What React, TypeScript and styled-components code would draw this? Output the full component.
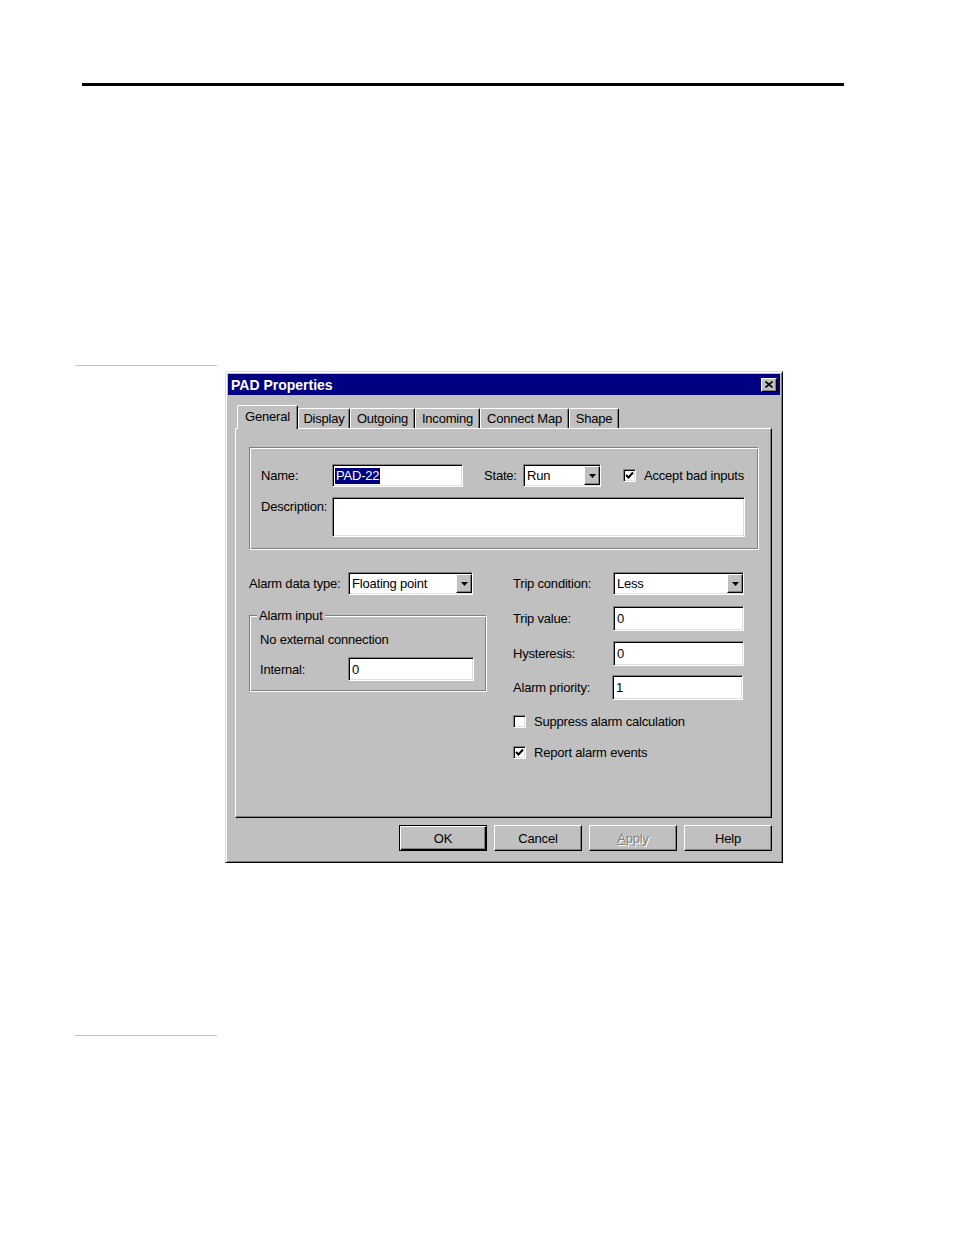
import React from 'react';
import styled, { createGlobalStyle, css } from 'styled-components';

const GlobalStyle = createGlobalStyle`
  html, body { margin: 0; padding: 0; background: #fff; }
  body { font-family: 'Liberation Sans', Arial, sans-serif; }
  * { box-sizing: border-box; }
`;

const Page = styled.div`
  width: 954px;
  min-height: 1235px;
  padding-top: 83px;
`;

const TopRule = styled.div`
  margin-left: 82px;
  width: 762px;
  height: 3px;
  background: #000;
`;

const FigureRow = styled.div`
  display: flex;
  align-items: flex-start;
  margin: 279px 0 0 75px;
`;

const MarginRule = styled.div`
  width: 142px;
  border-top: 1px solid #c4c4c4;
`;

const BottomRule = styled(MarginRule)`
  margin: 172px 0 0 75px;
`;

// ---- window chrome ----

const raised = css`
  border: 1px solid;
  border-color: #fff #000 #000 #fff;
  box-shadow: inset -1px -1px 0 #808080;
`;

const sunken = css`
  border: 1px solid;
  border-color: #808080 #fff #fff #808080;
  box-shadow: inset 1px 1px 0 #000, inset -1px -1px 0 #dfdfdf;
`;

const etched = css`
  border: 1px solid;
  border-color: #808080 #fff #fff #808080;
  box-shadow: inset 1px 1px 0 #fff, inset -1px -1px 0 #808080;
`;

const Dialog = styled.div`
  margin: 6px 0 0 8px;
  width: 558px;
  height: 492px;
  background: #c0c0c0;
  border: 1px solid;
  border-color: #dfdfdf #000 #000 #dfdfdf;
  box-shadow: inset 1px 1px 0 #fff, inset -1px -1px 0 #808080;
  padding: 2px;
  display: flex;
  flex-direction: column;
  font-size: 13px;
  letter-spacing: -0.2px;
  color: #000;
`;

const TitleBar = styled.div`
  height: 21px;
  background: #000080;
  color: #fff;
  font-weight: bold;
  font-size: 14px;
  letter-spacing: 0;
  display: flex;
  align-items: center;
  justify-content: space-between;
  padding: 0 3px 0 3px;
`;

const CloseButton = styled.div`
  ${raised};
  width: 16px;
  height: 14px;
  background: #c0c0c0;
  display: flex;
  align-items: center;
  justify-content: center;
`;

const Body = styled.div`
  flex: 1;
  display: flex;
  flex-direction: column;
  padding: 10px 8px 8px 7px;
`;

const TabStrip = styled.div`
  display: flex;
  align-items: flex-end;
  height: 23px;
  padding-left: 2px;
`;

const Tab = styled.div<{ $w: number; $active?: boolean }>`
  width: ${p => p.$w}px;
  height: ${p => (p.$active ? 24 : 20)}px;
  margin-bottom: ${p => (p.$active ? -1 : 0)}px;
  position: relative;
  z-index: ${p => (p.$active ? 1 : 0)};
  background: #c0c0c0;
  border-top: 1px solid #fff;
  border-left: 1px solid #fff;
  border-right: 1px solid #000;
  border-radius: 2px 2px 0 0;
  box-shadow: inset -1px 0 0 #808080;
  display: flex;
  align-items: ${p => (p.$active ? 'flex-start' : 'center')};
  padding-top: ${p => (p.$active ? 3 : 0)}px;
  justify-content: center;
  white-space: nowrap;
`;

const Panel = styled.div`
  ${raised};
  width: 537px;
  height: 390px;
  padding: 18px 0 0 13px;
`;

const TopGroup = styled.div`
  ${etched};
  width: 510px;
  height: 103px;
  padding: 16px 0 0 11px;
`;

const Row = styled.div<{ $top?: number; $align?: string }>`
  display: flex;
  align-items: ${p => p.$align || 'center'};
  margin-top: ${p => p.$top || 0}px;
  white-space: nowrap;
`;

const Label = styled.span<{ $w?: number; $top?: number }>`
  width: ${p => (p.$w ? `${p.$w}px` : 'auto')};
  flex: none;
  padding-top: ${p => p.$top || 0}px;
  line-height: 15px;
`;

const Field = styled.div<{ $w: number; $h: number; $ml?: number }>`
  ${sunken};
  width: ${p => p.$w}px;
  height: ${p => p.$h}px;
  margin-left: ${p => p.$ml || 0}px;
  background: #fff;
  display: flex;
  align-items: center;
  padding: 0 2px 0 3px;
  flex: none;
`;

const Selected = styled.span`
  background: #000080;
  color: #fff;
  margin-left: -1px;
  padding: 0 1px;
  line-height: 16px;
`;

const ComboText = styled.span`
  flex: 1;
`;

const ComboButton = styled.div`
  ${raised};
  width: 16px;
  height: 19px;
  margin-right: -1px;
  background: #c0c0c0;
  display: flex;
  align-items: center;
  justify-content: center;
`;

const CheckBox = styled.div<{ $ml?: number }>`
  ${sunken};
  width: 13px;
  height: 13px;
  background: #fff;
  margin-left: ${p => p.$ml || 0}px;
  margin-right: 8px;
  flex: none;
  display: flex;
  align-items: center;
  justify-content: center;
`;

const Lower = styled.div`
  display: flex;
  margin-top: 22px;
`;

const LeftCol = styled.div`
  width: 238px;
`;

const RightCol = styled.div`
  width: 231px;
  margin-left: 26px;
`;

const InputGroup = styled.div`
  ${etched};
  position: relative;
  margin-top: 20px;
  width: 238px;
  height: 77px;
  padding: 16px 0 0 10px;
`;

const Legend = styled.span`
  position: absolute;
  top: -8px;
  left: 7px;
  padding: 0 2px;
  background: #c0c0c0;
  line-height: 15px;
`;

const Note = styled.div`
  line-height: 15px;
`;

const Footer = styled.div`
  display: flex;
  justify-content: flex-end;
  gap: 7px;
  margin-top: 7px;
`;

const Button = styled.div<{ $default?: boolean; $disabled?: boolean }>`
  width: 88px;
  height: 26px;
  display: flex;
  align-items: center;
  justify-content: center;
  background: #c0c0c0;
  ${p =>
    p.$default
      ? css`
          border: 1px solid #000;
          box-shadow: inset 1px 1px 0 #fff, inset -1px -1px 0 #000, inset -2px -2px 0 #808080;
        `
      : raised};
  ${p =>
    p.$disabled &&
    css`
      color: #808080;
      text-shadow: 1px 1px 0 #fff;
    `}
`;

const Arrow = () => (
  <svg width="7" height="4" viewBox="0 0 7 4">
    <polygon points="0,0 7,0 3.5,4" fill="#000" />
  </svg>
);

const Check = () => (
  <svg width="9" height="9" viewBox="0 0 9 9">
    <polyline points="1,4 3.5,6.5 8,1.5" fill="none" stroke="#000" strokeWidth="2" />
  </svg>
);

const Combo: React.FC<{ w: number; value: string }> = ({ w, value }) => (
  <Field $w={w} $h={23} style={{ paddingRight: 1 }}>
    <ComboText>{value}</ComboText>
    <ComboButton>
      <Arrow />
    </ComboButton>
  </Field>
);

const tabs: [string, number][] = [
  ['General', 61],
  ['Display', 52],
  ['Outgoing', 65],
  ['Incoming', 65],
  ['Connect Map', 89],
  ['Shape', 50],
];

export default function App() {
  return (
    <Page>
      <GlobalStyle />
      <TopRule />
      <FigureRow>
        <MarginRule />
        <Dialog>
          <TitleBar>
            <span>PAD Properties</span>
            <CloseButton>
              <svg width="8" height="7" viewBox="0 0 8 7">
                <path d="M0.5 0.5 L7.5 6.5 M7.5 0.5 L0.5 6.5" stroke="#000" strokeWidth="1.6" />
              </svg>
            </CloseButton>
          </TitleBar>
          <Body>
            <TabStrip>
              {tabs.map(([t, w], i) => (
                <Tab key={t} $w={w} $active={i === 0}>
                  {t}
                </Tab>
              ))}
            </TabStrip>
            <Panel>
              <TopGroup>
                <Row>
                  <Label $w={71}>Name:</Label>
                  <Field $w={131} $h={23}>
                    <Selected>PAD-22</Selected>
                  </Field>
                  <Label $w={39} style={{ marginLeft: 21 }}>State:</Label>
                  <Combo w={78} value="Run" />
                  <CheckBox $ml={22}>
                    <Check />
                  </CheckBox>
                  <Label>Accept bad inputs</Label>
                </Row>
                <Row $top={10} $align="flex-start">
                  <Label $w={71} $top={2}>Description:</Label>
                  <Field $w={413} $h={40} />
                </Row>
              </TopGroup>
              <Lower>
                <LeftCol>
                  <Row>
                    <Label $w={99}>Alarm data type:</Label>
                    <Combo w={125} value="Floating point" />
                  </Row>
                  <InputGroup>
                    <Legend>Alarm input</Legend>
                    <Note>No external connection</Note>
                    <Row $top={10}>
                      <Label $w={88}>Internal:</Label>
                      <Field $w={126} $h={24}>0</Field>
                    </Row>
                  </InputGroup>
                </LeftCol>
                <RightCol>
                  <Row>
                    <Label $w={100}>Trip condition:</Label>
                    <Combo w={131} value="Less" />
                  </Row>
                  <Row $top={11}>
                    <Label $w={100}>Trip value:</Label>
                    <Field $w={131} $h={25}>0</Field>
                  </Row>
                  <Row $top={10}>
                    <Label $w={100}>Hysteresis:</Label>
                    <Field $w={131} $h={25}>0</Field>
                  </Row>
                  <Row $top={9}>
                    <Label $w={99}>Alarm priority:</Label>
                    <Field $w={131} $h={25}>1</Field>
                  </Row>
                  <Row $top={14}>
                    <CheckBox />
                    <Label>Suppress alarm calculation</Label>
                  </Row>
                  <Row $top={16}>
                    <CheckBox>
                      <Check />
                    </CheckBox>
                    <Label>Report alarm events</Label>
                  </Row>
                </RightCol>
              </Lower>
            </Panel>
            <Footer>
              <Button $default>OK</Button>
              <Button>Cancel</Button>
              <Button $disabled>
                <span>
                  <u>A</u>pply
                </span>
              </Button>
              <Button>Help</Button>
            </Footer>
          </Body>
        </Dialog>
      </FigureRow>
      <BottomRule />
    </Page>
  );
}
